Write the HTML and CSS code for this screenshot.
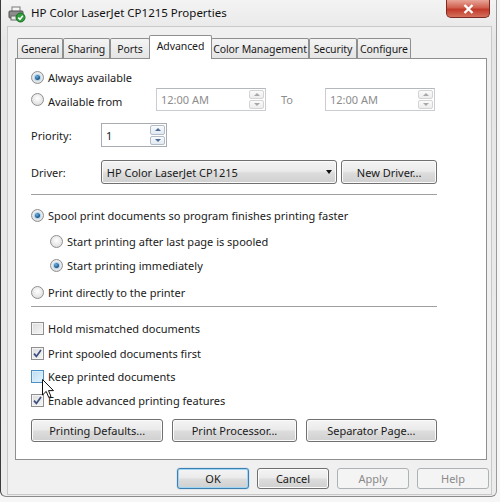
FILE: index.html
```html
<!DOCTYPE html>
<html lang="en">
<head>
  <meta charset="UTF-8">
  <title>HP Color LaserJet CP1215 Properties</title>
  <link rel="stylesheet" href="styles.css">
</head>
<body>

  <div class="window">

    <!-- Title bar -->
    <div class="titlebar">
      <svg class="app-icon" width="18" height="17" viewBox="0 0 18 17">
        <rect x="4" y="1" width="8" height="5" fill="#f4f4f4" stroke="#7a7a7a"/>
        <rect x="1" y="5" width="14" height="7" rx="1" fill="#8c8c8c" stroke="#4e4e4e"/>
        <rect x="3" y="10" width="10" height="4" fill="#e8e8e8" stroke="#6a6a6a"/>
        <circle cx="12.5" cy="11.5" r="4.5" fill="#2f9e3a" stroke="#1d6e25"/>
        <path d="M10.3 11.6 L12 13.3 L14.8 9.8" fill="none" stroke="#fff" stroke-width="1.5"/>
      </svg>
      <span class="title">HP Color LaserJet CP1215 Properties</span>
      <div class="close-btn">
        <svg width="11" height="10" viewBox="0 0 11 10">
          <path d="M1.5 1 L9.5 9 M9.5 1 L1.5 9" stroke="#fff" stroke-width="2.4"/>
        </svg>
      </div>
    </div>

    <div class="client">

      <!-- Tabs -->
      <div class="tabs">
        <div class="tab t-general">General</div>
        <div class="tab t-sharing">Sharing</div>
        <div class="tab t-ports">Ports</div>
        <div class="tab t-advanced active">Advanced</div>
        <div class="tab t-color">Color Management</div>
        <div class="tab t-security">Security</div>
        <div class="tab t-configure">Configure</div>
      </div>

      <!-- Advanced tab -->
      <div class="panel">

        <div class="row r-always">
          <span class="radio checked"></span>
          <span class="label">Always available</span>
        </div>

        <div class="row r-from">
          <span class="radio"></span>
          <span class="label from-label">Available from</span>
          <div class="field time-field">
            <span class="field-text">12:00 AM</span>
            <div class="spin"><span class="up"></span><span class="down"></span></div>
          </div>
          <span class="to-label">To</span>
          <div class="field time-field">
            <span class="field-text">12:00 AM</span>
            <div class="spin"><span class="up"></span><span class="down"></span></div>
          </div>
        </div>

        <div class="row r-priority">
          <span class="field-name">Priority:</span>
          <div class="field priority-field">
            <span class="field-text">1</span>
            <div class="spin"><span class="up"></span><span class="down"></span></div>
          </div>
        </div>

        <div class="row r-driver">
          <span class="field-name">Driver:</span>
          <div class="combo">
            <span>HP Color LaserJet CP1215</span>
            <span class="combo-arrow"></span>
          </div>
          <div class="btn new-driver">New Driver...</div>
        </div>

        <div class="sep sep-1"></div>

        <div class="row r-spool">
          <span class="radio checked"></span>
          <span class="label">Spool print documents so program finishes printing faster</span>
        </div>
        <div class="row sub r-after">
          <span class="radio"></span>
          <span class="label">Start printing after last page is spooled</span>
        </div>
        <div class="row sub r-now">
          <span class="radio checked"></span>
          <span class="label">Start printing immediately</span>
        </div>
        <div class="row r-direct">
          <span class="radio"></span>
          <span class="label">Print directly to the printer</span>
        </div>

        <div class="sep sep-2"></div>

        <div class="row r-hold">
          <span class="check"></span>
          <span class="label">Hold mismatched documents</span>
        </div>
        <div class="row r-first">
          <span class="check"><svg width="9" height="9" viewBox="0 0 9 9"><path d="M1 4.6 L3.4 7.4 L8 1" fill="none" stroke="#3b4f80" stroke-width="1.7"/></svg></span>
          <span class="label">Print spooled documents first</span>
        </div>
        <div class="row r-keep">
          <span class="check hover"></span>
          <span class="label">Keep printed documents</span>
        </div>
        <div class="row r-enable">
          <span class="check"><svg width="9" height="9" viewBox="0 0 9 9"><path d="M1 4.6 L3.4 7.4 L8 1" fill="none" stroke="#3b4f80" stroke-width="1.7"/></svg></span>
          <span class="label">Enable advanced printing features</span>
        </div>

        <div class="panel-buttons">
          <div class="btn b-defaults">Printing Defaults...</div>
          <div class="btn b-processor">Print Processor...</div>
          <div class="btn b-separator">Separator Page...</div>
        </div>
      </div>

      <!-- Dialog buttons -->
      <div class="dialog-buttons">
        <div class="btn dlg default">OK</div>
        <div class="btn dlg">Cancel</div>
        <div class="btn dlg disabled">Apply</div>
        <div class="btn dlg disabled">Help</div>
      </div>
    </div>

    <!-- Mouse pointer -->
    <svg class="cursor" width="13" height="20" viewBox="0 0 13 20">
      <path d="M0.5 0.5 L0.5 16 L4.2 12.4 L6.8 18.5 L9 17.5 L6.5 11.6 L11.5 11.6 Z" fill="#fff" stroke="#111" stroke-width="1"/>
    </svg>
  </div>

</body>
</html>
```

FILE: styles.css
```css
body {
  margin: 0;
  width: 500px;
  height: 502px;
  background-color: #f6f6f6;
  font-family: 'Noto Sans', sans-serif;
  font-size: 11px;
  color: #1a1a1a;
  overflow: hidden;
}

.window {
  position: relative;
  width: 497px;
  height: 497px;
  box-sizing: border-box;
  background: linear-gradient(to bottom, #f3f3f3, #e6e6e6 40px, #ececec);
  border-left: 1px solid #3c3c3c;
  border-right: 1px solid #9a9a9a;
  border-bottom: 1px solid #8a8a8a;
  border-radius: 0 0 6px 6px;
  padding: 0 4px 0 6px;
}

/* Title bar */
.titlebar {
  display: flex;
  align-items: flex-start;
  height: 26px;
}

.app-icon {
  margin: 6px 0 0 1px;
}

.title {
  margin: 5px 0 0 5px;
  font-size: 11.5px;
  color: #111;
}

.close-btn {
  margin-left: auto;
  margin-right: 2px;
  width: 44px;
  height: 18px;
  box-sizing: border-box;
  display: flex;
  align-items: center;
  justify-content: center;
  background: linear-gradient(to bottom, #e8a598, #d0604f 45%, #c23a2a 55%, #d5705d);
  border: 1px solid #7d2a22;
  border-top: none;
  border-radius: 0 0 5px 5px;
}

/* Client area */
.client {
  height: 469px;
  box-sizing: border-box;
  background-color: #f0f0f0;
  border: 1px solid #c8c8c8;
  padding: 8px 4px 0 7px;
}

/* Tabs */
.tabs {
  display: flex;
  align-items: flex-end;
  height: 24px;
  margin-bottom: -1px;
  padding-left: 2px;
  position: relative;
  z-index: 1;
}

.tab {
  height: 20px;
  box-sizing: border-box;
  display: flex;
  align-items: center;
  justify-content: center;
  border: 1px solid #8e8f8f;
  border-bottom: none;
  border-radius: 2px 2px 0 0;
  background: linear-gradient(to bottom, #f4f4f4, #e4e4e4);
  font-size: 10.5px;
  letter-spacing: -0.1px;
  white-space: nowrap;
  margin-bottom: 1px;
}

.tab.active {
  height: 24px;
  margin: 0 -1px 0 -1px;
  background: #fff;
  margin-bottom: 0;
  padding-bottom: 3px;
}

.t-general { width: 46px; }
.t-sharing { width: 47px; }
.t-ports { width: 40px; }
.t-advanced { width: 63px; }
.t-color { width: 98px; }
.t-security { width: 48px; }
.t-configure { width: 54px; }

.panel {
  height: 402px;
  box-sizing: border-box;
  background-color: #fff;
  border: 1px solid #8e8f8f;
  padding: 9px 49px 0 15px;
}

.row {
  display: flex;
  align-items: center;
  height: 18px;
}

.row.sub {
  padding-left: 19px;
}

.label {
  margin-left: 4px;
  white-space: nowrap;
}

/* Radio buttons and checkboxes */
.radio {
  width: 13px;
  height: 13px;
  box-sizing: border-box;
  border-radius: 50%;
  border: 1px solid #8f8f8f;
  background: radial-gradient(circle at 50% 40%, #ffffff, #e2e2e2 70%, #cfcfcf);
  display: flex;
  align-items: center;
  justify-content: center;
  flex-shrink: 0;
}

.radio.checked::after {
  content: "";
  width: 5px;
  height: 5px;
  border-radius: 50%;
  background: radial-gradient(circle at 40% 35%, #6fb3e6, #1d5a8c 60%, #143f66);
  box-shadow: 0 0 1px 1px #a9d2ef;
}

.check {
  width: 13px;
  height: 13px;
  box-sizing: border-box;
  border: 1px solid #8f8f8f;
  background: linear-gradient(135deg, #dcdcdc, #f6f6f6);
  box-shadow: inset 0 0 0 1px #f4f4f4;
  display: flex;
  align-items: center;
  justify-content: center;
  flex-shrink: 0;
}

.check.hover {
  border-color: #4f8fc2;
  background: linear-gradient(135deg, #b9dcf3, #e6f4fc);
  box-shadow: inset 0 0 0 1px #d8eefb;
}

/* Available from row */
.r-always { margin-top: 0; }

.r-from {
  height: 23px;
  margin-top: 2px;
}

.from-label {
  width: 108px;
  margin-top: 3px;
}

.field {
  height: 100%;
  box-sizing: border-box;
  border: 1px solid #c9cdd2;
  border-top-color: #b4b8bd;
  background: #fff;
  display: flex;
  align-items: center;
  justify-content: space-between;
  padding: 1px 1px 1px 4px;
}

.time-field {
  width: 110px;
  color: #8d8d8d;
}

.to-label {
  width: 59px;
  padding-left: 15px;
  box-sizing: border-box;
  color: #8d8d8d;
}

.spin {
  width: 15px;
  height: 100%;
  display: flex;
  flex-direction: column;
  gap: 1px;
}

.spin span {
  flex: 1;
  border: 1px solid #d4d4d4;
  border-radius: 2px;
  background: linear-gradient(to bottom, #fbfbfb, #ececec);
  display: flex;
  align-items: center;
  justify-content: center;
}

.spin .up::after,
.spin .down::after {
  content: "";
  border-left: 3px solid transparent;
  border-right: 3px solid transparent;
}

.spin .up::after { border-bottom: 3px solid #a8a8a8; }
.spin .down::after { border-top: 3px solid #a8a8a8; }

.r-priority {
  height: 24px;
  margin-top: 12px;
}

.field-name {
  width: 70px;
}

.priority-field {
  width: 66px;
  border-color: #a9adb3;
}

.priority-field .spin span {
  border-color: #b4bcc6;
  background: linear-gradient(to bottom, #f8fbfe, #e1e9f2);
}

.priority-field .spin .up::after { border-bottom-color: #4f6b8f; }
.priority-field .spin .down::after { border-top-color: #4f6b8f; }

.r-driver {
  height: 24px;
  margin-top: 13px;
}

/* Buttons */
.btn {
  box-sizing: border-box;
  display: flex;
  align-items: center;
  justify-content: center;
  border: 1px solid #707070;
  border-radius: 3px;
  background: linear-gradient(to bottom, #f4f4f4, #ebebeb 45%, #dcdcdc 55%, #d0d0d0);
  box-shadow: inset 0 0 0 1px #fbfbfb;
  white-space: nowrap;
}

.combo {
  width: 237px;
  height: 24px;
  box-sizing: border-box;
  display: flex;
  align-items: center;
  justify-content: space-between;
  padding: 0 4px 0 5px;
  border: 1px solid #707070;
  border-radius: 3px;
  background: linear-gradient(to bottom, #f4f4f4, #ebebeb 45%, #dcdcdc 55%, #d0d0d0);
  box-shadow: inset 0 0 0 1px #fbfbfb;
}

.combo-arrow {
  border-left: 3.5px solid transparent;
  border-right: 3.5px solid transparent;
  border-top: 4px solid #111;
}

.new-driver {
  width: 96px;
  height: 24px;
  margin-left: 4px;
}

.sep {
  height: 1px;
  background-color: #a0a0a0;
  border-bottom: 1px solid #fff;
}

.sep-1 { margin-top: 10px; }

.r-spool { margin-top: 10px; }
.r-after { margin-top: 8px; }
.r-now { margin-top: 6px; }
.r-direct { margin-top: 9px; }

.sep-2 { margin-top: 5px; }

.r-hold { margin-top: 11px; }
.r-first { margin-top: 7px; }
.r-keep { margin-top: 5px; }
.r-enable { margin-top: 6px; }

.panel-buttons {
  display: flex;
  margin-top: 10px;
}

.panel-buttons .btn {
  height: 23px;
}

.b-defaults { width: 133px; }
.b-processor { width: 125px; margin-left: 9px; }
.b-separator { width: 132px; margin-left: 9px; }

/* OK / Cancel / Apply / Help */
.dialog-buttons {
  display: flex;
  justify-content: flex-end;
  gap: 8px;
  margin-top: 8px;
  margin-right: -2px;
}

.btn.dlg {
  width: 72px;
  height: 21px;
}

.btn.default {
  border-color: #3c7fb1;
  box-shadow: inset 0 0 0 1px #9fd6f5, 0 0 1px #3c7fb1;
}

.btn.disabled {
  border-color: #adb2b5;
  background: #f4f4f4;
  box-shadow: none;
  color: #8a8a8a;
}

/* Mouse pointer over the checkbox */
.cursor {
  position: absolute;
  left: 41px;
  top: 379px;
}
```
